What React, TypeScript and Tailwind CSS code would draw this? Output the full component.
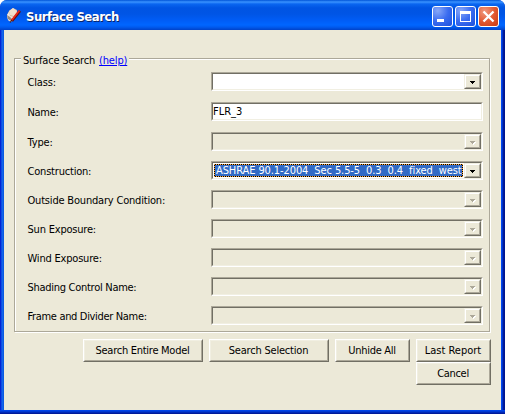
import React from "react";

const sunken =
  "border border-t-[#aca899] border-l-[#aca899] border-r-white border-b-white";
const sunkenInner =
  "border border-t-[#716f64] border-l-[#716f64] border-r-[#f1efe2] border-b-[#f1efe2]";

function Arrow({ disabled }: { disabled?: boolean }) {
  return (
    <svg width="7" height="5" viewBox="0 0 7 5" shapeRendering="crispEdges">
      {disabled && <path d="M2 2h5v1h-1v1h-1v1h-1v-1h-1v-1h-1z" fill="#fff" />}
      <path d="M1 1h5v1h-1v1h-1v1h-1v-1h-1v-1h-1z" fill={disabled ? "#aca899" : "#000"} />
    </svg>
  );
}

function Select({ value, disabled }: { value?: string; disabled?: boolean }) {
  return (
    <div className={`h-[19px] w-[272px] ${sunken}`}>
      <div className={`flex h-full ${sunkenInner} ${disabled ? "bg-[#ece9d8]" : "bg-white"}`}>
        <div className="flex min-w-0 flex-1 p-px">
          {value && (
            <div className="h-[13px] w-full bg-black">
              <div className="h-[13px] overflow-hidden border border-dotted border-[#ffa83a] bg-[#316ac5] bg-clip-padding pl-px leading-[12px] tracking-[-0.1px] whitespace-pre text-white">
                {value}
              </div>
            </div>
          )}
        </div>
        <div className="h-[15px] w-[17px] shrink-0 border border-t-[#f1efe2] border-r-[#716f64] border-b-[#716f64] border-l-[#f1efe2]">
          <div className="flex h-full items-center justify-center border border-t-white border-r-[#aca899] border-b-[#aca899] border-l-white bg-[#ece9d8] pt-[2px]">
            <Arrow disabled={disabled} />
          </div>
        </div>
      </div>
    </div>
  );
}

type RowProps = {
  label: string;
  tracking?: string;
  gap?: string;
  children: React.ReactNode;
};

function Row({ label, tracking = "tracking-[-0.15px]", gap = "mb-[10px]", children }: RowProps) {
  return (
    <div className={`flex h-[19px] ${gap}`}>
      <label className={`w-[184px] shrink-0 pl-[0.5px] leading-[21px] whitespace-nowrap ${tracking}`}>{label}</label>
      {children}
    </div>
  );
}

function Button({ children, className }: { children: React.ReactNode; className: string }) {
  return (
    <button className={`h-[23px] border border-t-white border-r-[#716f64] border-b-[#716f64] border-l-white ${className}`}>
      <span className="flex h-full items-center justify-center border border-t-[#f1efe2] border-r-[#aca899] border-b-[#aca899] border-l-[#f1efe2] pr-px leading-[19px] whitespace-nowrap">
        {children}
      </span>
    </button>
  );
}

function TitleButton({ children, close }: { children: React.ReactNode; close?: boolean }) {
  return (
    <button
      className={`flex h-[21px] w-[21px] items-center justify-center rounded-[3px] border border-white ${
        close
          ? "bg-[radial-gradient(circle_at_30%_25%,#f09a80,#e35a33_50%,#c83a12)]"
          : "bg-[radial-gradient(circle_at_25%_20%,#88a8f8,#3a6cf0_50%,#1c50dc)]"
      }`}
    >
      <svg width="19" height="19" viewBox="0 0 19 19" shapeRendering={close ? "auto" : "crispEdges"}>
        {children}
      </svg>
    </button>
  );
}

export default function App() {
  return (
    <div className="h-[414px] w-[505px] bg-white font-['DejaVu_Sans_Condensed','DejaVu_Sans',sans-serif] text-[11px] text-black [font-stretch:condensed]">
      <div className="flex h-full flex-col rounded-t-[7px] bg-[linear-gradient(90deg,#0019cf_0,#0831d9_1px,#166aee_2px,#0855dd_4px,#0048f1_50%,#0048f1_502px,#001ea0_503px,#00138c_505px)]">
        <header className="flex h-[30px] shrink-0 items-center rounded-t-[7px] bg-[linear-gradient(180deg,#0054d8_0,#3a93ff_2px,#0a66f0_4px,#0054e3_8px,#0055e5_14px,#005cf5_20px,#0066ff_25px,#005bf0_27px,#0042c8_30px)] pt-[3px] pr-[6px] pl-[6px]">
          <svg width="16" height="17" viewBox="0 0 16 17" className="mb-[3px]">
            <path d="M1 8 3 4 7 1 11 3 11 6 8 10 5 15 2 13z" fill="#d7b699" />
            <path d="M3 4 7 1 11 4 8 9 4 8z" fill="#f4dfcb" />
            <path d="M1 8 3 5 4 9 8 10 5 15 2 13z" fill="#eee8e2" />
            <path d="M1 8 2 12 5 14 6 12 4 10z" fill="#9b8678" />
            <path d="M6 14 14 4" stroke="#5a1414" strokeWidth="2.6" />
            <path d="M5.5 13.5 13.5 3.5" stroke="#ee2418" strokeWidth="1.9" />
            <path d="M4 15.5 6 13" stroke="#421b18" strokeWidth="1.2" />
          </svg>
          <h1 className="ml-[4px] flex-1 text-[13px] leading-[16px] font-bold tracking-[-0.5px] whitespace-nowrap text-white [text-shadow:1px_1px_0_#0a246a]">
            Surface Search
          </h1>
          <div className="flex gap-[2px]">
            <TitleButton>
              <rect x="4" y="12" width="7" height="3" fill="#fff" />
            </TitleButton>
            <TitleButton>
              <path d="M4 4h11v11H4zM5 7v7h9V7z" fill="#fff" fillRule="evenodd" />
            </TitleButton>
            <TitleButton close>
              <path d="M4.5 4.5 14.5 14.5M14.5 4.5 4.5 14.5" stroke="#fff" strokeWidth="2.3" />
            </TitleButton>
          </div>
        </header>
        <main className="mx-[4px] h-[380px] bg-[#ece9d8] pt-[28px] pl-[10px]">
          <fieldset className="h-[274px] w-[476px] border border-[#aca899] shadow-[1px_1px_0_#fff,inset_1px_1px_0_#fff]">
            <div className="-mt-[6px] ml-[6px] flex h-[14px] w-[108px] bg-[#ece9d8] pl-[2px] leading-[15px] whitespace-nowrap">
              <span className="w-[76px] tracking-[-0.2px]">Surface Search</span>
              <a className="tracking-[-0.15px] text-[#0000ff] underline">(help)</a>
            </div>
            <div className="mt-[5px] ml-[12px]">
              <Row label="Class:" gap="mb-[11px]"><Select /></Row>
              <Row label="Name:" gap="mb-[11px]" tracking="tracking-[-0.3px]">
                <div className={`h-[19px] w-[272px] ${sunken}`}>
                  <div className={`h-full bg-white leading-[16px] ${sunkenInner}`}>FLR_3</div>
                </div>
              </Row>
              <Row label="Type:"><Select disabled /></Row>
              <Row label="Construction:" tracking="tracking-[-0.2px]"><Select value="ASHRAE 90.1-2004  Sec 5.5-5  0.3  0.4  fixed  west" /></Row>
              <Row label="Outside Boundary Condition:" tracking="tracking-[-0.19px]"><Select disabled /></Row>
              <Row label="Sun Exposure:" tracking="tracking-[-0.2px]"><Select disabled /></Row>
              <Row label="Wind Exposure:" tracking="tracking-[-0.2px]"><Select disabled /></Row>
              <Row label="Shading Control Name:" tracking="tracking-[-0.28px]"><Select disabled /></Row>
              <Row label="Frame and Divider Name:" tracking="tracking-[-0.33px]"><Select disabled /></Row>
            </div>
          </fieldset>
          <div className="mt-[7px] flex w-[477px] flex-wrap justify-end gap-x-[6px]">
            <Button className="w-[120px] tracking-[-0.27px]">Search Entire Model</Button>
            <Button className="w-[120px] tracking-[-0.2px]">Search Selection</Button>
            <Button className="w-[75px] tracking-[-0.27px]">Unhide All</Button>
            <Button className="w-[75px]">Last Report</Button>
            <Button className="w-[75px] tracking-[-0.3px]">Cancel</Button>
          </div>
        </main>
        <footer className="h-[4px] bg-[linear-gradient(180deg,#0048f1_0,#0040e0_1px,#0020a8_3px,#00138c_4px)]" />
      </div>
    </div>
  );
}
